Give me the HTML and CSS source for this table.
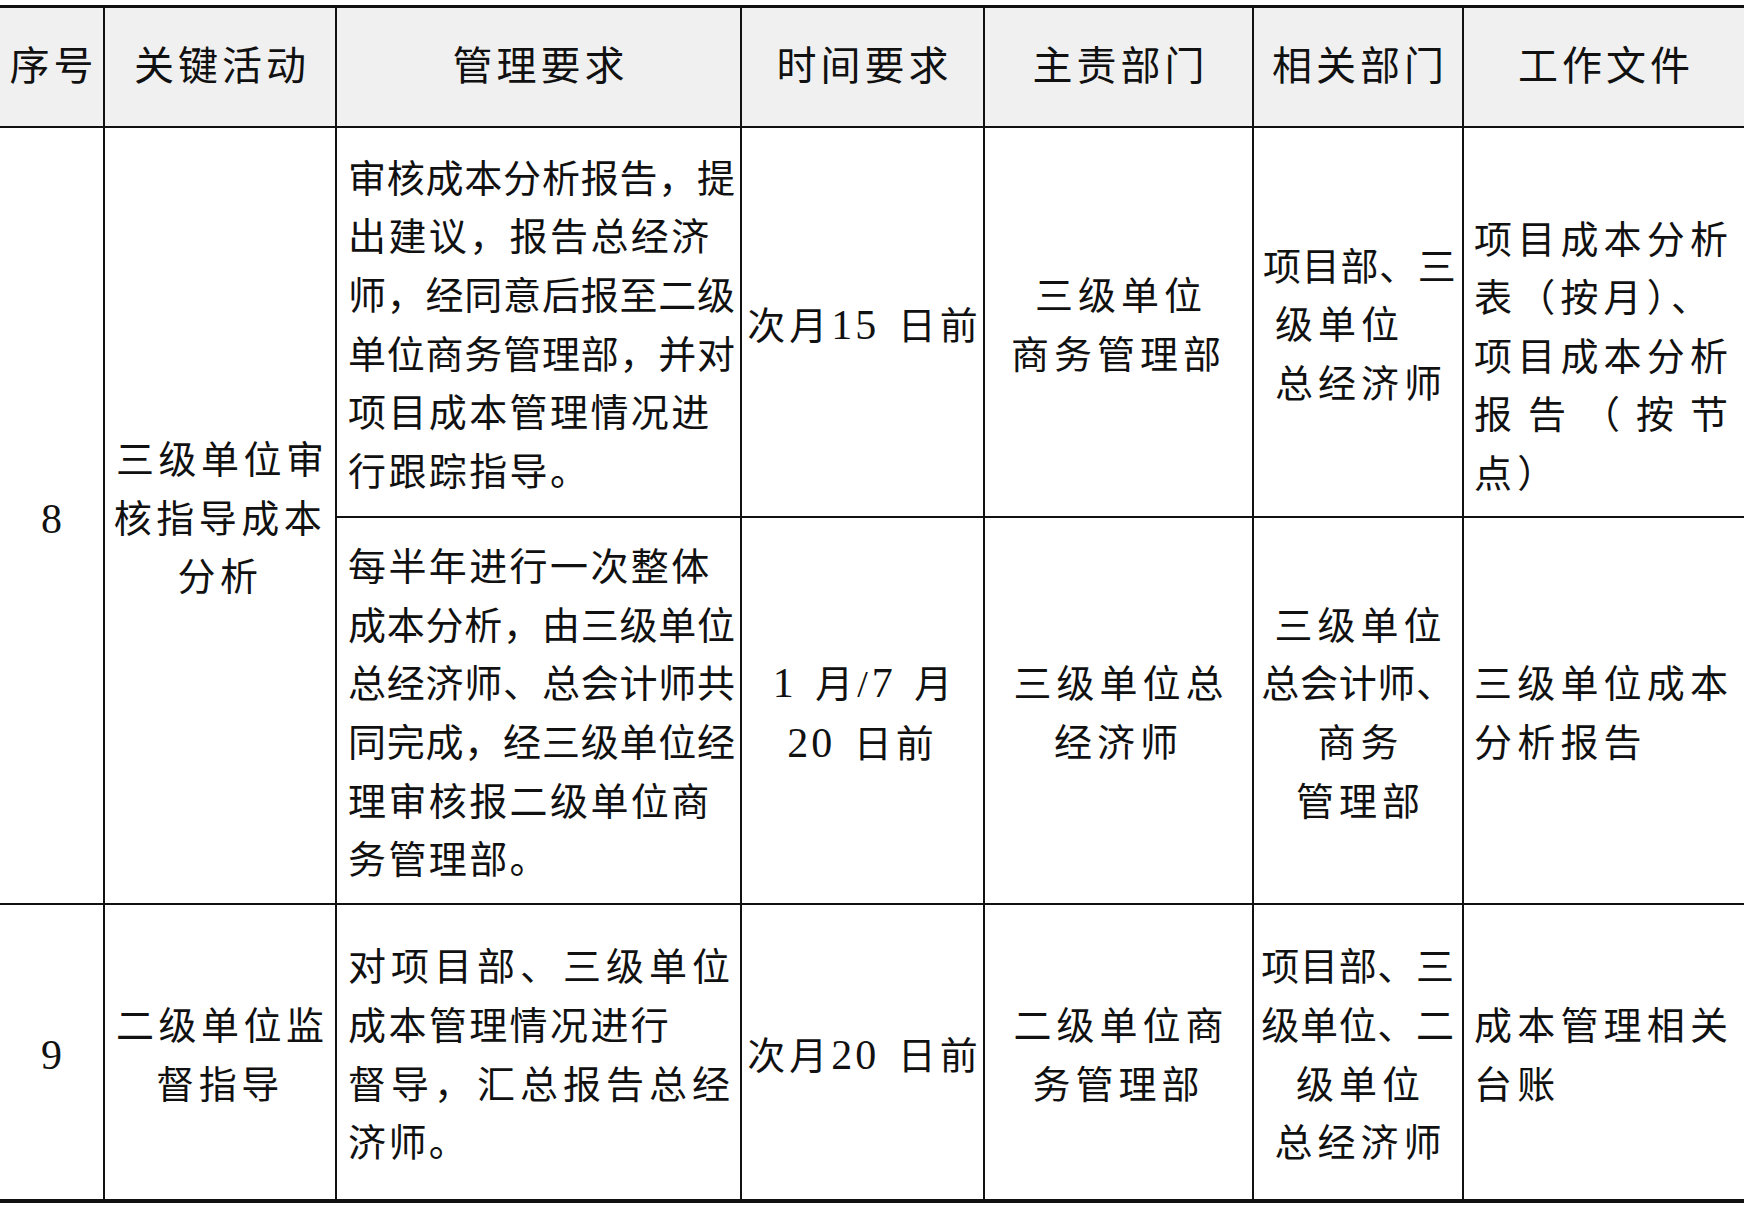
FILE: index.html
```html
<!DOCTYPE html>
<html lang="zh-CN">
<head>
<meta charset="utf-8">
<title>成本管理表</title>
<link rel="stylesheet" href="styles.css">
</head>
<body>
<table class="grid">
  <colgroup>
    <col class="c1"><col class="c2"><col class="c3"><col class="c4"><col class="c5"><col class="c6"><col class="c7">
  </colgroup>
  <thead>
    <tr class="head">
      <th>序号</th>
      <th>关键活动</th>
      <th>管理要求</th>
      <th>时间要求</th>
      <th>主责部门</th>
      <th>相关部门</th>
      <th>工作文件</th>
    </tr>
  </thead>
  <tbody>
    <tr class="r1">
      <td class="num" rowspan="2">8</td>
      <td class="act" rowspan="2">三级单位审<br>核指导成本<br>分析</td>
      <td class="req"><span class="ln j">审核成本分析报告，提</span><span class="ln">出建议，报告总经济</span><span class="ln j">师，经同意后报至二级</span><span class="ln j">单位商务管理部，并对</span><span class="ln">项目成本管理情况进</span><span class="ln">行跟踪指导。</span></td>
      <td class="time">次月<span class="d">15</span> 日前</td>
      <td class="dept">三级单位<br>商务管理部</td>
      <td class="rel rel-left"><span class="ln tight">项目部、三</span><span class="ln ind">级单位</span><span class="ln ind">总经济师</span></td>
      <td class="doc doc-bottom"><span class="ln">项目成本分析</span><span class="ln">表（按月）、</span><span class="ln">项目成本分析</span><span class="ln jl">报告（按节</span><span class="ln">点）</span></td>
    </tr>
    <tr class="r2">
      <td class="req"><span class="ln">每半年进行一次整体</span><span class="ln j">成本分析，由三级单位</span><span class="ln j">总经济师、总会计师共</span><span class="ln j">同完成，经三级单位经</span><span class="ln">理审核报二级单位商</span><span class="ln">务管理部。</span></td>
      <td class="time"><span class="d">1</span> 月/<span class="d">7</span> 月<br><span class="d">20</span> 日前</td>
      <td class="dept">三级单位总<br>经济师</td>
      <td class="rel"><span class="ln">三级单位</span><span class="ln tight">总会计师、</span><span class="ln">商务</span><span class="ln">管理部</span></td>
      <td class="doc"><span class="ln">三级单位成本</span><span class="ln">分析报告</span></td>
    </tr>
    <tr class="r3">
      <td class="num">9</td>
      <td class="act">二级单位监<br>督指导</td>
      <td class="req"><span class="ln j j9">对项目部、三级单位</span><span class="ln">成本管理情况进行</span><span class="ln j j9">督导，汇总报告总经</span><span class="ln">济师。</span></td>
      <td class="time">次月<span class="d">20</span> 日前</td>
      <td class="dept">二级单位商<br>务管理部</td>
      <td class="rel"><span class="ln tight">项目部、三</span><span class="ln tight">级单位、二</span><span class="ln">级单位</span><span class="ln">总经济师</span></td>
      <td class="doc"><span class="ln">成本管理相关</span><span class="ln">台账</span></td>
    </tr>
  </tbody>
</table>
</body>
</html>
```

FILE: styles.css
```css
html, body {
  margin: 0;
  padding: 0;
  background: #ffffff;
}

body {
  font-family: "Liberation Serif", "Noto Sans CJK SC", serif;
  color: #111111;
}

.grid {
  margin-top: 5px;
  width: 1744px;
  border-collapse: collapse;
  table-layout: fixed;
  border-top: 3px solid #111111;
  border-bottom: 4px solid #111111;
}

.c1 { width: 104px; }
.c2 { width: 232px; }
.c3 { width: 405px; }
.c4 { width: 243px; }
.c5 { width: 269px; }
.c6 { width: 210px; }
.c7 { width: 281px; }

.grid th,
.grid td {
  border-left: 2px solid #111111;
  border-top: 2px solid #111111;
  padding: 0;
  vertical-align: middle;
  font-weight: 400;
}

.grid th:first-child,
.grid td.num {
  border-left: none;
}

.head { height: 120px; }
.r1 { height: 390px; }
.r2 { height: 387px; }
.r3 { height: 297px; }

.head th {
  background: #f0f0f0;
  font-size: 40px;
  letter-spacing: 4px;
  text-indent: 4px;
  line-height: 50px;
  text-align: center;
  border-top: none;
}

.grid td {
  font-size: 38px;
  line-height: 58.6px;
  padding-top: 8px;
}

.grid td.num {
  text-align: center;
  font-size: 42px;
}

.act {
  text-align: center;
  letter-spacing: 4.5px;
  text-indent: 4.5px;
}

.ln {
  display: block;
}

.req {
  text-align: left;
  padding-left: 11px !important;
  padding-right: 5px !important;
  letter-spacing: 2.4px;
  white-space: nowrap;
}

.req .j {
  white-space: normal;
  letter-spacing: 0;
  text-align: justify;
  text-align-last: justify;
}

.req .j9 {
  margin-right: 5px;
}

.time {
  text-align: center;
  letter-spacing: 4px;
  word-spacing: 5px;
  text-indent: 4px;
  white-space: nowrap;
}

.time .d {
  font-size: 42px;
  letter-spacing: 3px;
}

.dept {
  text-align: center;
  letter-spacing: 5px;
  text-indent: 5px;
  white-space: nowrap;
}

.rel {
  text-align: center;
  letter-spacing: 5px;
  white-space: nowrap;
}

.rel .ln {
  padding-left: 5px;
}

.rel .tight {
  letter-spacing: 0.7px;
  padding-left: 0;
}

.rel-left {
  text-align: left;
  padding-left: 9px !important;
}

.rel-left .ind {
  padding-left: 12px;
}

.rel-left .tight {
  padding-left: 0;
}

.doc {
  text-align: left;
  padding-left: 10px !important;
  padding-right: 0 !important;
  letter-spacing: 5.2px;
}

.doc .ln {
  white-space: nowrap;
}

.doc-bottom {
  vertical-align: bottom !important;
  padding-bottom: 12px !important;
}

.doc .jl {
  white-space: normal;
  text-align: justify;
  text-align-last: justify;
  letter-spacing: 0;
  margin-right: 16px;
}
```
